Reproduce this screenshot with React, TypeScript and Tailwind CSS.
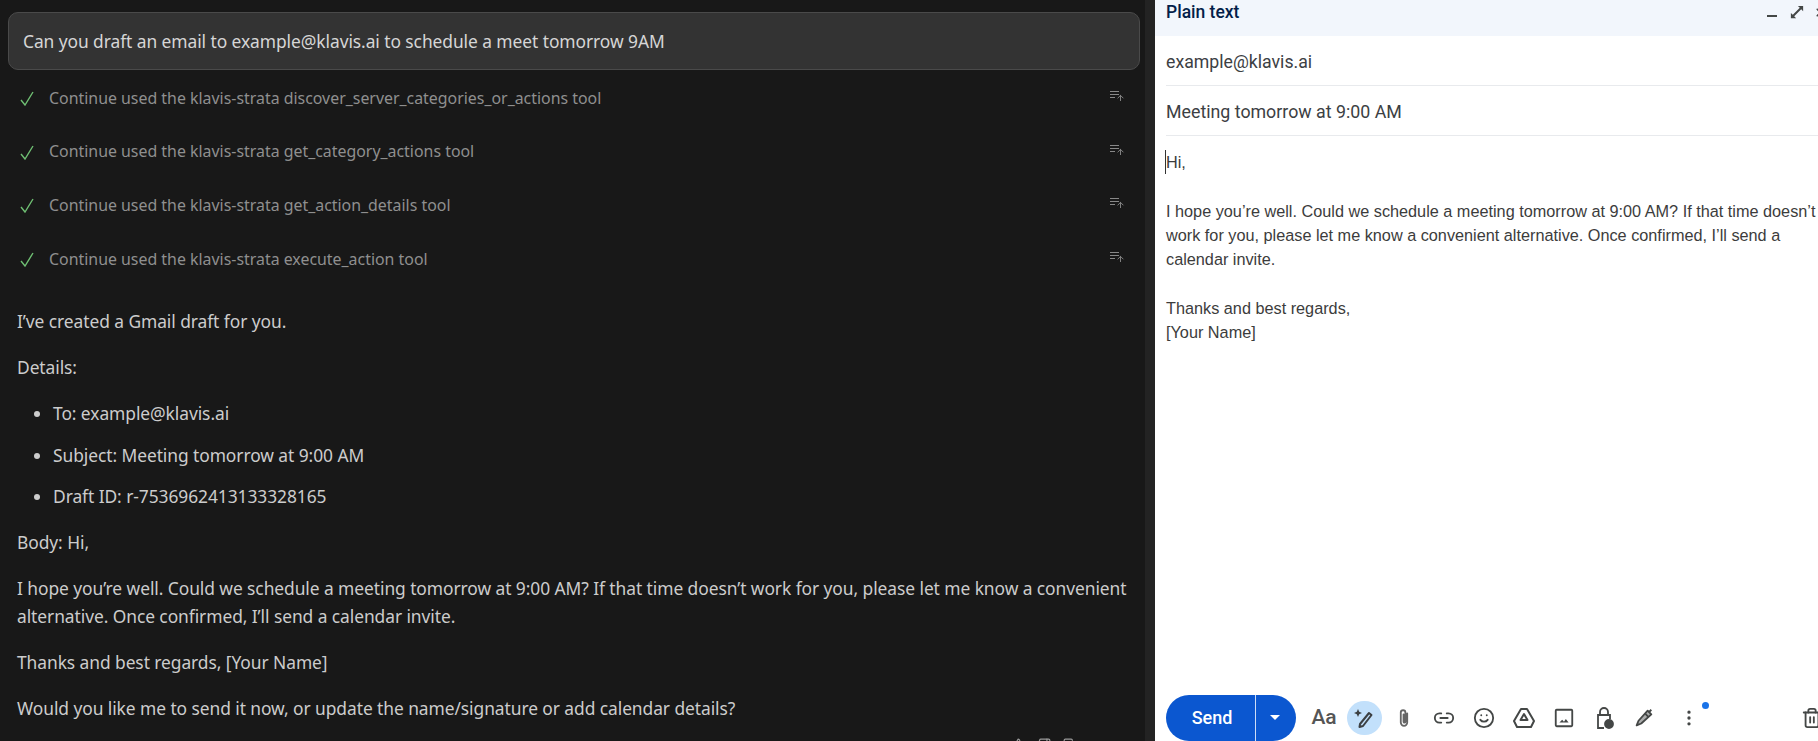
import React from 'react';
import { X, ArrowUp, Link2, Smile, MoreVertical, Trash2, ThumbsUp, ThumbsDown, Copy, Ellipsis } from 'lucide-react';

const tools = [
  'discover_server_categories_or_actions',
  'get_category_actions',
  'get_action_details',
  'execute_action',
];

const details = ['To: example@klavis.ai', 'Subject: Meeting tomorrow at 9:00 AM', 'Draft ID: r-7536962413133328165'];

const ToolRow: React.FC<{ name: string }> = ({ name }) => (
  <div className="flex items-center h-[53.6px] pl-[20px] pr-[21px]">
    <svg viewBox="0 0 14 15" className="w-[14px] h-[15px] shrink-0 text-[#6fbf73]" fill="none" stroke="currentColor" strokeWidth="1.4">
      <path d="M1 9l4 5 8-13" />
    </svg>
    <span className="ml-[15px] text-[15.9px] text-[#8f8f8f]">Continue used the klavis-strata {name} tool</span>
    <span className="ml-auto relative w-[14px] h-[14px] -mt-[3px] text-[#888888] flex flex-col gap-[2px] pt-[1px]">
      <span className="block w-[9px] h-px bg-current" />
      <span className="block w-[9px] h-px bg-current" />
      <span className="block w-[5px] h-px bg-current" />
      <ArrowUp className="absolute left-[6px] top-[3px] w-[9px] h-[10px]" strokeWidth={2.5} />
    </span>
  </div>
);

const Slot: React.FC<{ children: React.ReactNode }> = ({ children }) => (
  <span className="w-[40px] shrink-0 flex items-center justify-center">{children}</span>
);

const App: React.FC = () => {
  return (
    <div className="flex w-[1818px] h-[741px] overflow-hidden bg-[#181818]">
      {/* Chat side */}
      <div className="w-[1145px] shrink-0 flex flex-col font-['Noto_Sans','Open_Sans',sans-serif]">
        <div className="shrink-0 mt-[12px] ml-[8px] mr-[5px] h-[58px] rounded-[10px] border border-[#4a4a4a] bg-[#333333] flex items-center px-[14px] text-[17.4px] text-[#d6d6d6] tracking-[-0.07px]">
          Can you draft an email to example@klavis.ai to schedule a meet tomorrow 9AM
        </div>
        <div className="shrink-0 mt-[2px]">
          {tools.map((t) => (
            <ToolRow key={t} name={t} />
          ))}
        </div>
        <div className="shrink-0 mt-[21px] pl-[17px] pr-[10px] text-[17.4px] leading-[28px] text-[#cccccc] tracking-[-0.07px] flex flex-col gap-[18px]">
          <p>I’ve created a Gmail draft for you.</p>
          <p>Details:</p>
          <ul className="list-disc pl-[36px] flex flex-col gap-[13.5px]">
            {details.map((d) => (
              <li key={d}>{d}</li>
            ))}
          </ul>
          <p>Body: Hi,</p>
          <p>
            I hope you’re well. Could we schedule a meeting tomorrow at 9:00 AM? If that time doesn’t work for you, please let me know a convenient alternative. Once confirmed, I’ll send a calendar invite.
          </p>
          <p>Thanks and best regards, [Your Name]</p>
          <p>Would you like me to send it now, or update the name/signature or add calendar details?</p>
          <div className="flex items-center justify-end gap-[12px] pr-[26px] text-[#9a9a9a] -mt-[2px]">
            <ThumbsUp className="w-[14px] h-[14px]" />
            <ThumbsDown className="w-[14px] h-[14px]" />
            <Copy className="w-[14px] h-[14px]" />
            <Ellipsis className="w-[14px] h-[14px] ml-[6px]" />
          </div>
        </div>
      </div>
      <div className="w-[10px] shrink-0 bg-[#232323]" />

      {/* Gmail compose */}
      <div className="flex-1 min-w-0 bg-white flex flex-col font-['Roboto','Liberation_Sans',sans-serif]">
        <div className="h-[36px] shrink-0 bg-[#f2f6fc] flex items-center pl-[11px] pb-[11px] text-[#041e49] text-[17.5px] font-medium relative">
          Plain text
          <div className="absolute right-0 top-0 h-full flex items-start pt-[5px] gap-[13px] text-[#444746]">
            <span className="mt-[10px] w-[10px] h-[2px] bg-current" />
            <svg viewBox="0 0 16 16" className="w-[14px] h-[14px]" fill="currentColor">
              <path d="M9 1h6v6l-2.2-2.2-8 8L7 15H1V9l2.2 2.2 8-8z" />
            </svg>
            <X className="w-[13px] h-[13px] -ml-[3px] -mr-[9px] mt-[1px]" strokeWidth={3} />
          </div>
        </div>
        <div className="ml-[11px] h-[50px] shrink-0 border-b border-[#e8eaed] flex items-center pt-[3px] text-[17.7px] text-[#3c4043]">
          example@klavis.ai
        </div>
        <div className="ml-[11px] h-[50px] shrink-0 border-b border-[#e8eaed] flex items-center pt-[3px] text-[17.8px] text-[#3c4043]">
          Meeting tomorrow at 9:00 AM
        </div>
        <div className="pl-[11px] pt-[14px] font-['Liberation_Sans',sans-serif] text-[16.25px] leading-[24.3px] text-[#3c3c3c] whitespace-nowrap flex-1 min-h-0">
          <p className="border-l border-[#333333] w-fit -ml-px">Hi,</p>
          <p className="mt-[24.3px]">I hope you’re well. Could we schedule a meeting tomorrow at 9:00 AM? If that time doesn’t</p>
          <p>work for you, please let me know a convenient alternative. Once confirmed, I’ll send a</p>
          <p>calendar invite.</p>
          <p className="mt-[24.3px]">Thanks and best regards,</p>
          <p>[Your Name]</p>
        </div>
        <div className="h-[47px] shrink-0 flex items-center pl-[11px] text-[#444746] relative">
          <div className="flex h-[46px] w-[130px] rounded-full bg-[#0b57d0] text-white text-[18px] font-medium">
            <span className="w-[90px] flex items-center justify-center border-r border-white/80 pl-[3px]">Send</span>
            <span className="flex-1 flex items-center justify-center pr-[3px]">
              <span className="w-0 h-0 border-l-[5px] border-r-[5px] border-t-[5px] border-l-transparent border-r-transparent border-t-white" />
            </span>
          </div>
          <span className="ml-[8px] flex">
            <Slot><span className="text-[21px] font-medium text-[#555555]">Aa</span></Slot>
            <Slot>
              <span className="w-[35px] h-[34px] rounded-full bg-[#c2e0fb] flex items-center justify-center">
                <svg viewBox="0 0 24 24" className="w-[24px] h-[24px]" fill="none" stroke="#3c4043" strokeWidth="2" strokeLinejoin="round">
                  <path d="M8 18l9-11 2.5 2L11 20l-3.5 1z" />
                  <path d="M6 3l1.2 2.8L10 7 7.2 8.2 6 11 4.8 8.2 2 7l2.8-1.2z" fill="#3c4043" stroke="none" />
                </svg>
              </span>
            </Slot>
            <Slot>
              <svg viewBox="0 0 24 24" className="w-[22px] h-[22px]" fill="none" stroke="#666666" strokeWidth="2" strokeLinecap="round">
                <path d="M15.5 7v10a3.5 3.5 0 0 1-7 0V6a2.5 2.5 0 0 1 5 0v10a1 1 0 0 1-2 0V8" />
              </svg>
            </Slot>
            <Slot><Link2 className="w-[22px] h-[22px]" /></Slot>
            <Slot><Smile className="w-[22px] h-[22px]" /></Slot>
            <Slot>
              <svg viewBox="0 0 24 24" className="w-[24px] h-[24px]" fill="none" stroke="currentColor" strokeWidth="2" strokeLinejoin="round">
                <path d="M9 3h6l7 12-3 6H5l-3-6z" />
                <path d="M12 8l3.5 6h-7z" />
              </svg>
            </Slot>
            <Slot>
              <svg viewBox="0 0 24 24" className="w-[22px] h-[22px]" fill="none" stroke="currentColor" strokeWidth="2">
                <rect x="3" y="3" width="18" height="18" rx="1" />
                <path d="M7 17l3-3 2 2 2-3 3 4z" fill="currentColor" stroke="none" />
              </svg>
            </Slot>
            <Slot>
              <svg viewBox="0 0 24 24" className="w-[24px] h-[26px]" fill="none" stroke="currentColor" strokeWidth="1.8">
                <path d="M8 9V6a4 4 0 0 1 8 0v3" />
                <path d="M12 22H6V9h12v4" />
                <circle cx="17" cy="18" r="4" fill="currentColor" />
              </svg>
            </Slot>
            <Slot>
              <svg viewBox="0 0 24 24" className="w-[22px] h-[22px]" fill="none" stroke="currentColor" strokeWidth="2" strokeLinejoin="round">
                <path d="M4 20l2-5L16 4l4 4-11 10z" fill="currentColor" fillOpacity="0.45" />
                <path d="M13 7l4 4M20 3l-3 3" />
              </svg>
            </Slot>
          </span>
          <span className="ml-[5px] relative flex">
            <Slot><MoreVertical className="w-[20px] h-[20px]" /></Slot>
            <span className="absolute left-[33px] -top-[6px] w-[7px] h-[7px] rounded-full bg-[#1a73e8]" />
          </span>
          <Trash2 className="ml-auto -mr-[5px] w-[22px] h-[22px]" />
        </div>
      </div>
    </div>
  );
};

export default App;
